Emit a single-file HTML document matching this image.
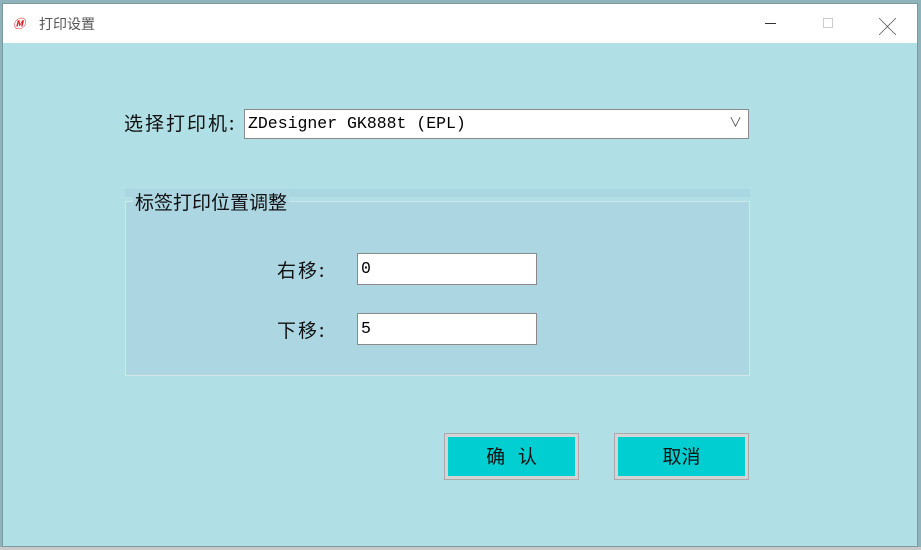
<!DOCTYPE html>
<html><head><meta charset="utf-8"><style>
*{margin:0;padding:0;box-sizing:border-box}
body{width:921px;height:550px;overflow:hidden;background:#8fb3bb;position:relative;font-family:"Liberation Sans","Noto Sans CJK SC",sans-serif}
.win{position:absolute;left:2px;top:3px;width:916px;height:544px;background:#b0dfe5;border:1px solid #7a9aa0}
.title{position:absolute;left:0;top:0;width:914px;height:39px;background:#fff}
.t{position:absolute;left:36px;top:10px;font-size:14px;color:#555}
.abs{position:absolute}
.lbl{font-size:19px;letter-spacing:2px;color:#111;font-family:"Noto Sans CJK SC",sans-serif;line-height:22px}
.inp{position:absolute;background:#fff;border:1px solid #8a8a8a;font-family:"Liberation Mono","Noto Sans CJK SC",monospace;font-size:16.5px;color:#000;padding-left:3px}
.btn{position:absolute;width:133px;height:45px;border:3px solid #d4d4d4;background:#00ced1;outline:1px solid #aaa;font-size:19px;text-align:center;line-height:38px;color:#111;font-family:"Noto Sans CJK SC",sans-serif}
</style></head><body>
<div class="abs" style="left:0;top:547px;width:921px;height:3px;background:#c9c9c9"></div>
<div class="win">
 <div class="title">
  <div class="abs" style="left:10px;top:11px;font-size:12px;color:#e0161e;font-style:italic;font-weight:bold">Ⓜ</div>
  <div class="t">打印设置</div>
  <div class="abs" style="left:762px;top:19px;width:11px;height:1px;background:#333"></div>
  <div class="abs" style="left:820px;top:14px;width:10px;height:10px;border:1px solid #ccc"></div>
  <div class="abs" style="left:876px;top:9px;font-size:17px;color:#444">╳</div>
 </div>
 <div class="abs lbl" style="left:121px;top:108px">选择打印机:</div>
 <div class="inp" style="left:241px;top:105px;width:505px;height:30px;line-height:28px">ZDesigner GK888t (EPL)<span class="abs" style="right:6px;top:0;font-size:13px;color:#555">∨</span></div>
 <div class="abs" style="left:122px;top:185px;width:625px;height:8px;background:#a9d6e0"></div>
 <div class="abs" style="left:122px;top:197px;width:625px;height:175px;background:#acd6e2;border:1px solid #d4e6ea"></div>
 <div class="abs" style="left:130px;top:186px;font-size:19px;color:#111;background:#acd6e2;padding:0 2px;font-family:'Noto Sans CJK SC',sans-serif;line-height:24px">标签打印位置调整</div>
 <div class="abs lbl" style="left:274px;top:255px">右移:</div>
 <div class="inp" style="left:354px;top:249px;width:180px;height:32px;line-height:30px">0</div>
 <div class="abs lbl" style="left:274px;top:315px">下移:</div>
 <div class="inp" style="left:354px;top:309px;width:180px;height:32px;line-height:30px">5</div>
 <div class="btn" style="left:442px;top:430px">确&nbsp;&nbsp;&nbsp;认</div>
 <div class="btn" style="left:612px;top:430px">取消</div>
</div>
</body></html>
